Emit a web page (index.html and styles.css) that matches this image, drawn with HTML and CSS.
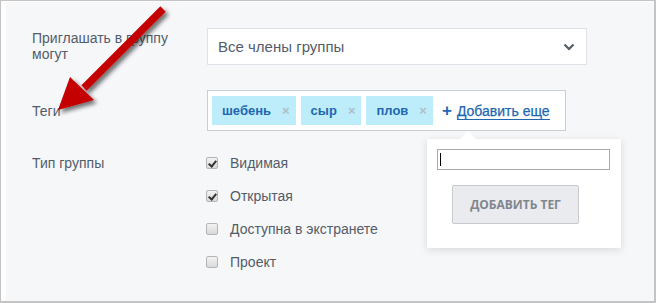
FILE: index.html
```html
<!DOCTYPE html>
<html lang="ru">
<head>
<meta charset="utf-8">
<link rel="stylesheet" href="styles.css">
</head>
<body>
<div class="frame">
  <div class="form">
    <div class="label label-invite">Приглашать в группу могут</div>
    <div class="control">
      <div class="select">
        <span>Все члены группы</span>
        <svg class="chev" width="12" height="8" viewBox="0 0 12 8"><path d="M1.5 1.5 L6 6 L10.5 1.5" fill="none" stroke="#535c69" stroke-width="2.2"/></svg>
      </div>
    </div>

    <div class="label label-tags">Теги</div>
    <div class="control">
      <div class="tags">
        <span class="tag">шебень<span class="x">×</span></span>
        <span class="tag">сыр<span class="x">×</span></span>
        <span class="tag">плов<span class="x">×</span></span>
        <span class="add"><b class="plus">+</b><span class="add-link">Добавить еще</span></span>
        <div class="popup">
          <div class="notch"></div>
          <div class="input"><span class="caret"></span></div>
          <div class="btn">ДОБАВИТЬ ТЕГ</div>
        </div>
      </div>
    </div>

    <div class="label label-type">Тип группы</div>
    <div class="control">
      <ul class="checks">
        <li><span class="cb on"></span>Видимая</li>
        <li><span class="cb on"></span>Открытая</li>
        <li><span class="cb"></span>Доступна в экстранете</li>
        <li><span class="cb"></span>Проект</li>
      </ul>
    </div>
  </div>

  <svg class="arrow" width="200" height="130" viewBox="0 0 200 130">
    <defs>
      <filter id="sh" x="-20%" y="-20%" width="150%" height="150%">
        <feGaussianBlur in="SourceAlpha" stdDeviation="2"/>
        <feOffset dx="3" dy="3"/>
        <feComponentTransfer><feFuncA type="linear" slope="0.55"/></feComponentTransfer>
        <feMerge><feMergeNode/><feMergeNode in="SourceGraphic"/></feMerge>
      </filter>
    </defs>
    <g filter="url(#sh)">
      <line x1="162" y1="8" x2="83" y2="87" stroke="#c50000" stroke-width="7.5"/>
      <polygon points="57,109 69,76 93,99" fill="#c50000"/>
    </g>
  </svg>
</div>
</body>
</html>
```
FILE: styles.css
```css
* { box-sizing: border-box; }
html, body { margin: 0; padding: 0; background: #fff; }
body { font-family: "Liberation Sans", Arial, sans-serif; }

.frame {
  position: relative;
  width: 656px;
  height: 303px;
  border-top: 1px solid #c4c4c4;
  border-left: 1px solid #c4c4c4;
  border-right: 2px solid #c4c4c4;
  border-bottom: 2px solid #c4c4c4;
  background: #f6f7f9;
  box-shadow: inset 5px 1px 0 #fdfdfe;
  overflow: hidden;
}

.form {
  display: grid;
  grid-template-columns: 175px 380px;
  grid-template-rows: 37px 41px auto;
  row-gap: 25px;
  padding: 27px 0 0 31px;
}

.label {
  font-size: 14px;
  line-height: 16px;
  color: #535c69;
  width: 150px;
}
.label-invite { padding-top: 2px; }
.label-tags { padding-top: 13px; }
.label-type { padding-top: 0; margin-top: -1px; }

.select {
  height: 37px;
  width: 380px;
  background: #fff;
  border: 1px solid #dfe2e6;
  display: flex;
  align-items: center;
  justify-content: space-between;
  padding: 0 11px 0 10px;
  font-size: 15px;
  color: #535c69;
}
.chev { display: block; }

.tags {
  position: relative;
  width: 359px;
  height: 41px;
  background: #fff;
  border: 1px solid #c8ced4;
  display: flex;
  align-items: center;
  padding: 0 0 0 4px;
  gap: 5px;
}
.tag {
  display: flex;
  align-items: center;
  height: 29px;
  background: #bdedfb;
  color: #2167b0;
  font-weight: bold;
  font-size: 13px;
  padding: 0 6px 0 10px;
}
.tag .x {
  font-weight: bold;
  color: #aebfc8;
  font-size: 13px;
  margin-left: 11px;
}
.add {
  display: flex;
  align-items: center;
  margin-left: 4px;
  color: #2167b0;
  font-size: 14px;
}
.plus { font-size: 17px; margin-right: 5px; font-weight: bold; }
.add-link {
  border-bottom: 1px solid #2167b0;
  line-height: 16px;
  margin-top: 2px;
  -webkit-text-stroke: 0.25px #2167b0;
}

.popup {
  position: absolute;
  left: 219px;
  top: 48px;
  width: 194px;
  height: 109px;
  background: #fff;
  box-shadow: 0 2px 8px rgba(0, 0, 0, 0.12);
  padding: 10px 10px 0 10px;
}
.notch {
  position: absolute;
  left: 33px;
  top: -8px;
  width: 0;
  height: 0;
  border-left: 8px solid transparent;
  border-right: 8px solid transparent;
  border-bottom: 8px solid #fff;
}
.input {
  height: 21px;
  width: 173px;
  border: 1px solid #a9a9a9;
  background: #fff;
  padding: 3px 0 0 2px;
}
.caret {
  display: block;
  width: 1px;
  height: 13px;
  background: #000;
}
.btn {
  margin: 15px 0 0 15px;
  width: 127px;
  height: 39px;
  background: #e9ebee;
  border: 1px solid #c6c9cd;
  border-radius: 2px;
  display: flex;
  align-items: center;
  justify-content: center;
  font-family: "Open Sans", sans-serif;
  font-weight: bold;
  font-size: 12px;
  color: #80868e;
}

.checks {
  list-style: none;
  margin: -1px 0 0 0;
  padding: 0;
  display: flex;
  flex-direction: column;
  gap: 17px;
}
.checks li {
  display: flex;
  align-items: center;
  height: 16px;
  font-size: 14px;
  color: #535c69;
}
.cb {
  width: 12px;
  height: 12px;
  border: 1px solid #b5b5b5;
  border-radius: 2px;
  background: linear-gradient(#f2f2f2, #d9d9d9);
  margin: 0 12px 0 -1px;
  position: relative;
}
.cb.on::after {
  content: "";
  position: absolute;
  left: 3px;
  top: 1px;
  width: 3px;
  height: 6px;
  border-right: 2px solid #333;
  border-bottom: 2px solid #333;
  transform: rotate(40deg);
}

.arrow {
  position: absolute;
  left: 0;
  top: 0;
  pointer-events: none;
}
```
